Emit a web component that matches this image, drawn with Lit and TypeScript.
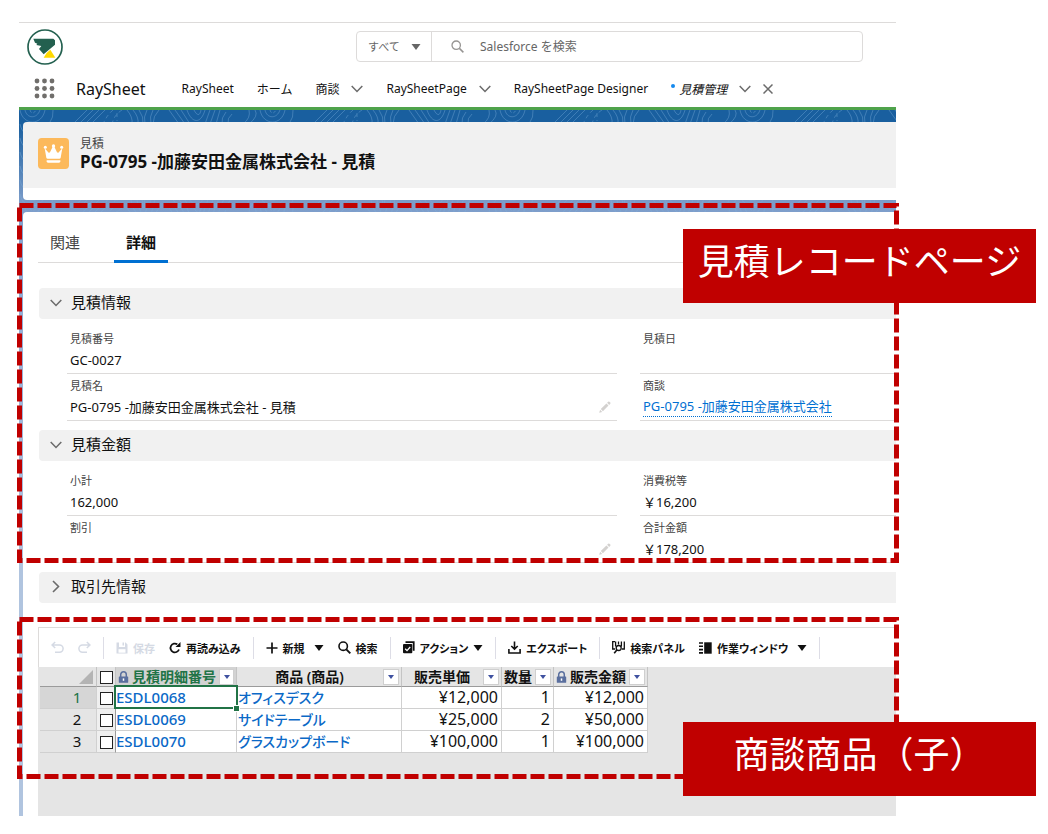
import { LitElement, html, css, svg, nothing } from "lit";
import { customElement, state } from "lit/decorators.js";

interface NavItem {
  label: string;
  menu?: boolean;
}

interface Field {
  label: string;
  value: string;
  link?: boolean;
  editable?: boolean;
}

interface Line {
  id: string;
  product: string;
  price: string;
  quantity: string;
  amount: string;
}

const NAV: NavItem[] = [
  { label: "RaySheet" },
  { label: "ホーム" },
  { label: "商談", menu: true },
  { label: "RaySheetPage", menu: true },
  { label: "RaySheetPage Designer" },
];

const INFO: Field[] = [
  { label: "見積番号", value: "GC-0027" },
  { label: "見積日", value: "" },
  { label: "見積名", value: "PG-0795 -加藤安田金属株式会社 - 見積", editable: true },
  { label: "商談", value: "PG-0795 -加藤安田金属株式会社", link: true },
];

const AMOUNTS: Field[] = [
  { label: "小計", value: "162,000" },
  { label: "消費税等", value: "￥16,200" },
  { label: "割引", value: "", editable: true },
  { label: "合計金額", value: "￥178,200" },
];

const LINES: Line[] = [
  { id: "ESDL0068", product: "オフィスデスク", price: "¥12,000", quantity: "1", amount: "¥12,000" },
  { id: "ESDL0069", product: "サイドテーブル", price: "¥25,000", quantity: "2", amount: "¥50,000" },
  { id: "ESDL0070", product: "グラスカップボード", price: "¥100,000", quantity: "1", amount: "¥100,000" },
];

const chevronDown = html`<svg width="12" height="8" viewBox="0 0 12 8" aria-hidden="true">
  <path d="M0.7 1L6 6.500L11.300 1" fill="none" stroke="#6b6b6b" stroke-width="1.5" />
</svg>`;

const chevronRight = html`<svg width="8" height="13" viewBox="0 0 8 13" aria-hidden="true">
  <path d="M1 1l5.5 5.5L1 12" fill="none" stroke="#6b6b6b" stroke-width="1.6" />
</svg>`;

const caret = html`<svg width="10" height="6" viewBox="0 0 10 6" aria-hidden="true">
  <path d="M0.5 0h9L5 6z" fill="currentColor" />
</svg>`;

const lock = html`<svg width="11" height="12" viewBox="0 0 11 12" aria-hidden="true">
  <path d="M2.7 6V3.6a2.8 2.8 0 0 1 5.6 0V6" fill="none" stroke="#5a6f9e" stroke-width="1.5" />
  <rect x="0.8" y="5.4" width="9.4" height="6.4" rx="0.6" fill="#5a6f9e" />
  <path d="M5.5 7.4v2.4" stroke="#fff" stroke-width="1.5" />
</svg>`;

const pencil = html`<svg width="12" height="12" viewBox="0 0 12 12" aria-hidden="true">
  <path d="M0.2 11.8l0.9-3L3.2 10.9zM1.8 8.1l5.6-5.6 2.1 2.1-5.6 5.6zM8.1 1.8l1.1-1.1q0.6-0.5 1.2 0l0.9 0.9q0.5 0.6 0 1.2l-1.1 1.1z" fill="#d3d1cf" />
</svg>`;

const frame = html`<svg class="frame" aria-hidden="true"><rect class="dash" x="2.5" y="2.5" /></svg>`;

const contours = svg`
  <g fill="none" stroke="#7fb0dc" stroke-opacity="0.38" stroke-width="1">
    <path d="M6 0c2 9 12 9 15 0M1 0c3 16 22 16 25 0" />
    <path d="M11 0c1 4 4 4 6 0" stroke-dasharray="3 2" />
    <path d="M34 0q1 7-4 14M68 0L54 14M74 0L60 14M80 0L66 14M86 0L72 14" />
    <path d="M94 0q-6 5-10 14M103 0q-8 5-10 14M98 3v8" stroke-dasharray="4 3" />
    <path d="M108 0q6 7 5 14M114 0q6 7 5 14M120 0q5 7 4 14M128 0q-4 7-2 14M134 0q-4 7-2 14M140 0q-6 6-6 14" />
    <path d="M150 0l10 14M156 0l10 14M162 0l9 14M168 0c5 14 14 14 18 0M175 0c3 6 6 6 7 0M191 0l-5 14M196 0l-5 14M201 0l-4 14M207 2q-5 6-4 12M213 4q-5 4-4 10" />
    <path d="M236 0q4 6-6 14M230 0q2 8-6 14" />
  </g>`;

@customElement("app-root")
export class AppRoot extends LitElement {
  @state() private tab = "詳細";

  static styles = css`
    :host {
      display: block;
      font-family: "Noto Sans", "Noto Sans CJK JP", sans-serif;
      color: #111;
      background: #fff;
      overflow-x: hidden;
    }
    * {
      box-sizing: border-box;
    }
    a {
      color: inherit;
      text-decoration: none;
    }
    button,
    select,
    input {
      font: inherit;
      color: inherit;
      margin: 0;
    }
    button {
      background: none;
      border: 0;
      padding: 0;
      display: flex;
      align-items: center;
    }
    svg {
      display: block;
      flex: none;
    }
    .page {
      min-height: 100vh;
      padding: 22px 152px 18px 19px;
      display: flex;
      flex-direction: column;
    }
    .top {
      border-top: 1px solid #dddbda;
      min-height: 48px;
      display: flex;
      align-items: center;
      justify-content: space-between;
      padding: 0 33px 0 8px;
    }
    .search {
      flex: 0 1 507px;
      height: 31px;
      display: flex;
      border: 1px solid #dddbda;
      border-radius: 4px;
      font-size: 12px;
      color: #666;
    }
    .scope {
      display: grid;
      align-items: center;
      border-right: 1px solid #dddbda;
      flex: 0 0 75px;
    }
    .scope > * {
      grid-area: 1 / 1;
    }
    .scope select {
      appearance: none;
      border: 0;
      background: none;
      padding: 0 0 0 11px;
      width: 100%;
      height: 100%;
      font-size: 11px;
    }
    .scope svg {
      justify-self: end;
      margin-right: 10px;
    }
    .term {
      flex: 1;
      display: flex;
      align-items: center;
      gap: 16px;
      padding-left: 19px;
      min-width: 0;
    }
    .term input {
      flex: 1;
      min-width: 0;
      border: 0;
      padding: 0;
      outline: 0;
      background: none;
    }
    .term input::placeholder {
      color: #666;
      opacity: 1;
    }
    .nav {
      min-height: 37px;
      display: flex;
      align-items: center;
      padding-left: 15px;
      font-size: 12px;
      white-space: nowrap;
    }
    .app {
      font-size: 16px;
      margin: 0 36px 0 21px;
    }
    .items {
      display: flex;
      align-items: center;
      gap: 23px;
    }
    .item {
      display: flex;
      align-items: center;
      gap: 12px;
    }
    .unsaved {
      width: 4px;
      height: 4px;
      border-radius: 2px;
      background: #1589ee;
      margin: 0 -8px 6px 0;
    }
    .italic {
      font-style: italic;
    }
    .canvas {
      flex: 1;
      display: flex;
      flex-direction: column;
      gap: 12px;
      padding: 12px 0 0 4px;
      border-top: 3px solid #4fa34b;
      background: linear-gradient(#195f9f 0, #195f9f 14px, #7b9cc9 92px, #8ba9d3 150px, #b0c4df 460px);
      position: relative;
    }
    .contours {
      position: absolute;
      inset: 0 0 auto 0;
      width: 100%;
      height: 110px;
    }
    .head {
      position: relative;
      background: #f1f1f1;
      border-bottom: 12px solid #fff;
      border-radius: 4px 0 0 4px;
      min-height: 78px;
      padding: 14px 16px 0 15px;
      display: flex;
      gap: 11px;
    }
    .crown {
      margin-top: 2px;
    }
    .kind {
      font-size: 12px;
      line-height: 16px;
      color: #444;
      margin: 0;
    }
    h1 {
      font-size: 17px;
      line-height: 20px;
      margin: 0;
      font-weight: 700;
    }
    .record {
      flex: 1;
      display: flex;
      flex-direction: column;
      background: #fff;
      border-radius: 4px 0 0 0;
      position: relative;
    }
    .region {
      position: relative;
    }
    .frame {
      position: absolute;
      pointer-events: none;
      left: -6px;
      top: -9px;
      width: calc(100% + 9px);
      height: calc(100% + 9px);
    }
    .dash {
      width: calc(100% - 5px);
      height: calc(100% - 5px);
      fill: none;
      stroke: #c00000;
      stroke-width: 5px;
      stroke-dasharray: 14px 4px;
    }
    .callout {
      position: absolute;
      right: -140px;
      top: 17px;
      width: 353px;
      padding: 5px 0 19px;
      background: #c00000;
      color: #fff;
      font-family: "Noto Sans CJK JP", sans-serif;
      font-size: 36px;
      line-height: 50px;
      text-align: center;
      white-space: nowrap;
    }
    .tabs {
      display: flex;
      gap: 22px;
      margin: 0 0 25px 15px;
      font-size: 15px;
      line-height: 24px;
      box-shadow: inset 0 -1px #dddbda;
    }
    .tab {
      padding: 18px 12px 6px;
      border-bottom: 3px solid transparent;
      color: #444;
    }
    .tab.on {
      border-color: #0070d2;
      color: #111;
      font-weight: 700;
    }
    .section {
      margin: 0 0 0 16px;
      font-size: 15px;
      font-weight: 400;
      line-height: 29px;
      background: #f1f1f1;
      border-radius: 4px 0 0 4px;
    }
    .section button {
      width: 100%;
      height: 31px;
      padding: 0 0 2px 10px;
      gap: 9px;
    }
    .mark {
      width: 13px;
      display: flex;
      justify-content: center;
    }
    .fields {
      margin: 0;
      padding: 8px 0 0 44px;
      display: grid;
      grid-template-columns: 550fr 256fr;
      column-gap: 23px;
    }
    .gap {
      height: 9px;
    }
    .field {
      border-bottom: 1px solid #dddbda;
      padding: 4px 6px 0 3px;
    }
    .field dt {
      font-size: 11px;
      line-height: 16px;
      color: #444;
    }
    .field dd {
      margin: 0;
      font-size: 13px;
      line-height: 26px;
      height: 26px;
      display: flex;
      justify-content: space-between;
      align-items: center;
    }
    .lookup {
      color: #0070d2;
      line-height: 19px;
      border-bottom: 1px dotted #0070d2;
    }
    .sheet {
      flex: 1;
      margin: 24px 0 0 15px;
      background: #e5e5e5;
      font-feature-settings: "palt";
    }
    .sheet .frame {
      left: -21px;
      top: -10px;
      width: calc(100% + 24px);
      height: calc(100% + 36px);
    }
    .sheet .callout {
      top: 95px;
      font-feature-settings: normal;
    }
    .toolbar {
      display: flex;
      align-items: center;
      height: 40px;
      background: #fff;
      border: 1px solid #dddbda;
      border-width: 1px 0 0 1px;
      font-size: 11px;
      font-weight: 600;
      white-space: nowrap;
    }
    .group {
      display: flex;
      align-items: center;
      gap: 14px;
      padding: 0 12px;
      height: 22px;
      border-right: 1px solid #dddde6;
    }
    .group button {
      gap: 5px;
    }
    .group .more {
      margin-left: -5px;
    }
    .off {
      color: #d5dae4;
    }
    table {
      border-collapse: separate;
      border-spacing: 0;
      table-layout: fixed;
      width: 608px;
      margin-left: 2px;
      font-size: 15px;
      line-height: 21px;
    }
    th,
    td {
      padding: 0;
      height: 22px;
      border-right: 1px solid #d0d0d0;
      border-bottom: 1px solid #d0d0d0;
      white-space: nowrap;
    }
    td {
      background: #fff;
    }
    thead th {
      height: 20px;
      font-size: 14px;
      line-height: 19px;
      font-weight: 600;
      background: #e5e5e5;
      border-right-color: #c4c4c4;
      border-bottom-color: #9b9b9b;
    }
    .c-row {
      width: 57px;
    }
    .c-box {
      width: 19px;
    }
    .c-id {
      width: 121px;
    }
    .c-product {
      width: 165px;
    }
    .c-price {
      width: 100px;
    }
    .c-qty {
      width: 52px;
    }
    .c-amount {
      width: 94px;
    }
    .hcell {
      display: flex;
      align-items: center;
      gap: 3px;
      padding: 0 2px;
    }
    .hcell span {
      flex: 1;
      text-align: center;
    }
    .filter {
      width: 16px;
      height: 16px;
      background: #fff;
      border: 1px solid #cfcfcf;
      justify-content: center;
      color: #3f51a0;
    }
    thead .active {
      background: #d3d3d3;
      color: #217346;
    }
    .corner {
      margin: 0 3px 0 auto;
    }
    .rownum {
      background: #e5e5e5;
      font-weight: 400;
      padding-left: 18px;
    }
    .rownum.active {
      background: #d6d6d6;
      color: #217346;
    }
    .tick {
      appearance: none;
      display: block;
      width: 13px;
      height: 13px;
      margin: 2px auto 0;
      border: 1px solid #222;
      background: #fff;
    }
    tbody .box {
      background: #efefef;
      border-right-color: #9b9b9b;
    }
    .link {
      color: #0b69c7;
      font-weight: 500;
      display: block;
    }
    .product {
      font-size: 14px;
      padding-left: 1px;
    }
    .num {
      text-align: right;
      padding-right: 3px;
      font-size: 16px;
    }
    .selected {
      position: relative;
    }
    .selected::before {
      content: "";
      position: absolute;
      inset: -2px -2px -1px -2px;
      border: 2px solid #217346;
      pointer-events: none;
    }
    .selected::after {
      content: "";
      position: absolute;
      right: -3px;
      bottom: -3px;
      width: 5px;
      height: 5px;
      background: #217346;
      outline: 1px solid #fff;
    }
  `;

  private renderTop() {
    return html`
      <div class="top">
        <a href="#" aria-label="RaySheet">
          <svg width="36" height="36" viewBox="0 0 108 108">
            <circle cx="54" cy="54" r="51" fill="#fff" stroke="#23604f" stroke-width="5" />
            <path d="M19 29H79L84 34V47L50 76L36 60L43 51L28 48L31 44L24 41Z" fill="#23604f" />
            <path d="M50 86Q56 71 70 62L85 86Z" fill="#ffd900" />
          </svg>
        </a>
        <div class="search">
          <div class="scope">
            <select aria-label="検索対象">
              <option>すべて</option>
            </select>
            ${caret}
          </div>
          <label class="term">
            <svg width="13" height="13" viewBox="0 0 13 13" aria-hidden="true">
              <circle cx="5.2" cy="5.2" r="4.2" fill="none" stroke="#969492" stroke-width="1.3" />
              <path d="M8.4 8.4l4 4" stroke="#969492" stroke-width="1.5" />
            </svg>
            <input type="search" aria-label="検索" placeholder="Salesforce を検索" />
          </label>
        </div>
      </div>
    `;
  }

  private renderNav() {
    const dots = [3, 10.5, 18];
    return html`
      <nav class="nav">
        <button aria-label="アプリケーションランチャー">
          <svg width="21" height="21" viewBox="0 0 21 21">
            ${dots.map((y) => dots.map((x) => svg`<circle cx=${x} cy=${y} r="2.4" fill="#706e6b" />`))}
          </svg>
        </button>
        <span class="app">RaySheet</span>
        <div class="items">
          ${NAV.map(
            (n) => html`<div class="item">
              <a href="#">${n.label}</a>
              ${n.menu ? html`<button aria-label=${`${n.label} メニュー`}>${chevronDown}</button>` : nothing}
            </div>`
          )}
          <div class="item">
            <span class="unsaved"></span>
            <a href="#" class="italic">見積管理</a>
            <button aria-label="見積管理 メニュー">${chevronDown}</button>
            <button aria-label="閉じる">
              <svg width="10" height="10" viewBox="0 0 10 10">
                <path d="M0.5 0.5l9 9M9.5 0.5l-9 9" stroke="#6b6b6b" stroke-width="1.5" />
              </svg>
            </button>
          </div>
        </div>
      </nav>
    `;
  }

  private renderHead() {
    return html`
      <header class="head">
        <svg class="crown" width="31" height="31" viewBox="0 0 93 93" aria-hidden="true">
          <rect width="93" height="93" rx="11" fill="#fcb95b" />
          <g fill="#fff">
            <circle cx="22" cy="28" r="4.5" />
            <circle cx="46.5" cy="24" r="5" />
            <circle cx="71" cy="28" r="4.5" />
            <path d="M20 31l12 13q2 1 4-1l8-17h5l8 17q2 2 4 1l12-13-5 28q-1 3-4 3H29q-3 0-4-3z" />
            <path d="M26 67h41v3q0 4-4 4H30q-4 0-4-4z" />
          </g>
        </svg>
        <div>
          <p class="kind">見積</p>
          <h1>PG-0795 -加藤安田金属株式会社 - 見積</h1>
        </div>
      </header>
    `;
  }

  private renderSection(title: string, open: boolean) {
    return html`<h2 class="section">
      <button aria-expanded=${open ? "true" : "false"}>
        <span class="mark">${open ? chevronDown : chevronRight}</span>${title}
      </button>
    </h2>`;
  }

  private renderFields(fields: Field[]) {
    return html`<dl class="fields">
      ${fields.map(
        (f) => html`<div class="field">
          <dt>${f.label}</dt>
          <dd>
            ${f.link ? html`<a class="lookup" href="#">${f.value}</a>` : html`<span>${f.value}</span>`}
            ${f.editable ? html`<button aria-label=${`${f.label} を編集`}>${pencil}</button>` : nothing}
          </dd>
        </div>`
      )}
    </dl>`;
  }

  private renderToolbar() {
    return html`
      <div class="toolbar" role="toolbar">
        <div class="group">
          <button class="off" aria-label="元に戻す" disabled>
            <svg width="13" height="13" viewBox="0 0 13 13">
              <path d="M4.2 1L1 4l3.2 3M1 4h7.5a3.6 3.6 0 0 1 0 7.2H4" fill="none" stroke="currentColor" stroke-width="1.5" />
            </svg>
          </button>
          <button class="off" aria-label="やり直し" disabled>
            <svg width="13" height="13" viewBox="0 0 13 13">
              <path d="M8.8 1L12 4l-3.2 3M12 4H4.5a3.6 3.6 0 0 0 0 7.2H9" fill="none" stroke="currentColor" stroke-width="1.5" />
            </svg>
          </button>
        </div>
        <div class="group">
          <button class="off" disabled>
            <svg width="12" height="12" viewBox="0 0 12 12" aria-hidden="true">
              <path d="M1 0.5h2v4.5h6V0.5h0.6L11.5 2.5v9H0.5v-11zM6.5 0.5h1.5v3H6.5z" fill="currentColor" />
              <path d="M2.5 7.2h7v3.5h-7z" fill="#fff" />
            </svg>
            保存
          </button>
          <button>
            <svg width="12" height="12" viewBox="0 0 12 12" aria-hidden="true">
              <path d="M10 7.5A4.4 4.4 0 1 1 8.3 2.3" fill="none" stroke="currentColor" stroke-width="1.8" />
              <path d="M6.5 5h5V0z" fill="currentColor" />
            </svg>
            再読み込み
          </button>
        </div>
        <div class="group">
          <button>
            <svg width="12" height="12" viewBox="0 0 12 12" aria-hidden="true">
              <path d="M6 0.5v11M0.5 6h11" stroke="currentColor" stroke-width="1.7" />
            </svg>
            新規
          </button>
          <button class="more" aria-label="新規メニュー">${caret}</button>
          <button>
            <svg width="13" height="13" viewBox="0 0 13 13" aria-hidden="true">
              <circle cx="5.2" cy="5.2" r="4.2" fill="none" stroke="currentColor" stroke-width="1.6" />
              <path d="M8.3 8.3l4 4" stroke="currentColor" stroke-width="1.9" />
            </svg>
            検索
          </button>
        </div>
        <div class="group">
          <button>
            <svg width="12" height="13" viewBox="0 0 12 13" aria-hidden="true">
              <path d="M2.5 1.2H10.700V9.700" fill="none" stroke="currentColor" stroke-width="1.8" />
              <rect y="3" width="9.300" height="9.300" rx="1" fill="currentColor" />
              <path d="M2.200 7.800l1.800 1.800L7.200 6" fill="none" stroke="#fff" stroke-width="1.3" />
            </svg>
            アクション ${caret}
          </button>
        </div>
        <div class="group">
          <button>
            <svg width="13" height="13" viewBox="0 0 13 13" aria-hidden="true">
              <path d="M6.5 0.5v7.5M3.3 5l3.2 3.2L9.7 5M0.9 8v4h11.2V8" fill="none" stroke="currentColor" stroke-width="1.6" />
            </svg>
            エクスポート
          </button>
        </div>
        <div class="group">
          <button>
            <svg width="13" height="13" viewBox="0 0 13 13" aria-hidden="true">
              <path d="M3 0.7H0.7V8H3M10 8h2.3V0.5M3.6 0.5v5M6.5 0.5v3M9.4 0.5v5" fill="none" stroke="currentColor" stroke-width="1.3" />
              <circle cx="6.7" cy="7" r="2.5" fill="#fff" stroke="currentColor" stroke-width="1.3" />
              <path d="M5 8.8L2.2 12.3" stroke="currentColor" stroke-width="1.6" />
            </svg>
            検索パネル
          </button>
          <button>
            <svg width="13" height="12" viewBox="0 0 13 12" aria-hidden="true">
              <path d="M0 1h4M0 4.3h4M0 7.6h4M0 10.9h4" stroke="currentColor" stroke-width="1.6" />
              <rect x="5.2" y="0.3" width="7.5" height="11.4" fill="currentColor" />
            </svg>
            作業ウィンドウ
          </button>
          <button class="more" aria-label="作業ウィンドウメニュー">${caret}</button>
        </div>
      </div>
    `;
  }

  private headerCell(title: string, cls: string, locked = false) {
    return html`<th class=${cls} scope="col">
      <div class="hcell">
        ${locked ? lock : nothing}<span>${title}</span>
        <button class="filter" aria-label=${`${title} フィルター`}>
          <svg width="6" height="4" viewBox="0 0 6 4"><path d="M0 0h6L3 4z" fill="currentColor" /></svg>
        </button>
      </div>
    </th>`;
  }

  private renderTable() {
    return html`
      <table>
        <thead>
          <tr>
            <th class="c-row">
              <svg class="corner" width="14" height="14" viewBox="0 0 14 14" aria-hidden="true">
                <path d="M14 0v14H0z" fill="#b4b4b4" />
              </svg>
            </th>
            <th class="c-box"><input class="tick" type="checkbox" aria-label="すべて選択" /></th>
            ${this.headerCell("見積明細番号", "c-id active", true)}
            ${this.headerCell("商品 (商品)", "c-product")} ${this.headerCell("販売単価", "c-price")}
            ${this.headerCell("数量", "c-qty")} ${this.headerCell("販売金額", "c-amount", true)}
          </tr>
        </thead>
        <tbody>
          ${LINES.map(
            (l, i) => html`<tr>
              <th class="rownum ${i === 0 ? "active" : ""}" scope="row">${i + 1}</th>
              <td class="box"><input class="tick" type="checkbox" aria-label=${l.id} /></td>
              <td class=${i === 0 ? "selected" : ""}><a class="link" href="#">${l.id}</a></td>
              <td><a class="link product" href="#">${l.product}</a></td>
              <td class="num">${l.price}</td>
              <td class="num">${l.quantity}</td>
              <td class="num">${l.amount}</td>
            </tr>`
          )}
        </tbody>
      </table>
    `;
  }

  render() {
    return html`
      <div class="page">
        ${this.renderTop()} ${this.renderNav()}
        <main class="canvas">
          <svg class="contours" aria-hidden="true">
            <defs>
              <pattern id="contour" width="240" height="14" patternUnits="userSpaceOnUse">${contours}</pattern>
            </defs>
            <rect width="100%" height="100%" fill="url(#contour)" />
          </svg>
          ${this.renderHead()}
          <div class="record">
            <div class="region">
              <div class="tabs" role="tablist">
                ${["関連", "詳細"].map(
                  (t) => html`<button
                    class="tab ${this.tab === t ? "on" : ""}"
                    role="tab"
                    aria-selected=${this.tab === t ? "true" : "false"}
                    @click=${() => (this.tab = t)}
                  >
                    ${t}
                  </button>`
                )}
              </div>
              ${this.renderSection("見積情報", true)} ${this.renderFields(INFO)}
              <div class="gap"></div>
              ${this.renderSection("見積金額", true)} ${this.renderFields(AMOUNTS)} ${frame}
              <div class="callout">見積レコードページ</div>
            </div>
            <div class="gap"></div>
            ${this.renderSection("取引先情報", false)}
            <div class="sheet">
              <div class="region">
                ${this.renderToolbar()} ${this.renderTable()} ${frame}
                <div class="callout">商談商品（子）</div>
              </div>
            </div>
          </div>
        </main>
      </div>
    `;
  }
}
